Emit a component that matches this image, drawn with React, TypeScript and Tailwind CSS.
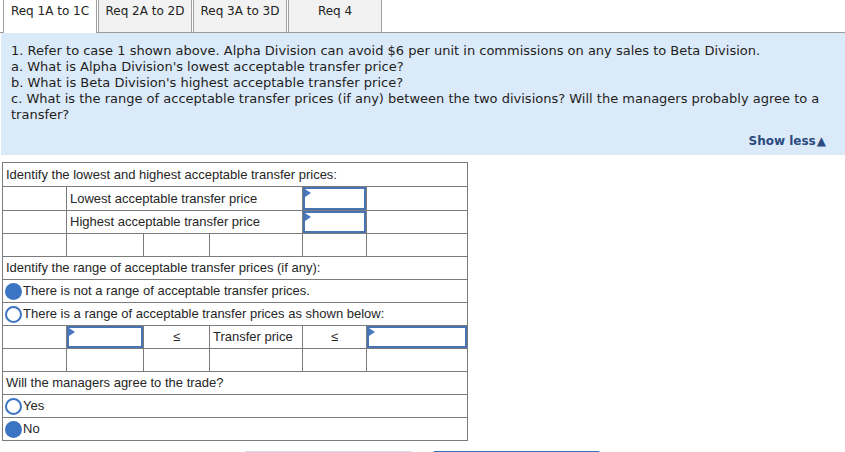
import React from "react"

const tabs = ["Req 1A to 1C", "Req 2A to 2D", "Req 3A to 3D", "Req 4"]

const cellBase = "border border-[#7b7b7b] h-[23px] p-0 px-[3px] align-middle"
const cell = cellBase + " text-left"
const cellCenter = cellBase + " text-center"

function AnswerBox({ tall }: { tall?: boolean }) {
  return (
    <div className={"relative border-2 border-[#4a73b3] bg-white " + (tall ? "h-[23px]" : "h-[22px]")}>
      <span className="absolute left-0 top-0 h-0 w-0 border-y-[4px] border-l-[6px] border-y-transparent border-l-[#4a78c0]" />
    </div>
  )
}

function Radio({ checked }: { checked?: boolean }) {
  return (
    <span
      className={
        "inline-block h-[17px] w-[17px] shrink-0 rounded-full " +
        (checked ? "bg-[#3b74c2]" : "border-2 border-[#3b74c2] bg-white")
      }
    />
  )
}

function RadioRow({ label, checked }: { label: string; checked?: boolean }) {
  return (
    <tr>
      <td colSpan={6} className="border border-[#7b7b7b] h-[23px] p-0 pl-[2px]">
        <div className="flex items-center gap-[1px]">
          <Radio checked={checked} />
          <span>{label}</span>
        </div>
      </td>
    </tr>
  )
}

export default function App() {
  return (
    <div className="w-[845px] h-[452px] overflow-hidden bg-white text-[#222]">
      {/* Tabs */}
      <div className="flex h-[33px] border-b border-[#9a9a9a] pl-[3px] font-['DejaVu_Sans',Verdana,sans-serif] text-[12px]">
        {tabs.map((t, i) => (
          <div
            key={t}
            className={
              "w-[94px] border-x border-[#a0a0a0] pt-[2px] text-center " +
              (i === 0 ? "bg-white -mb-px h-[33px]" : "bg-[#f2f2f2] ml-px h-[32px]")
            }
          >
            {t}
          </div>
        ))}
      </div>

      {/* Question */}
      <div className="ml-px h-[122px] bg-[#dbeaf8] pl-[10px] pr-[14px] pt-[10px] font-['DejaVu_Sans',Verdana,sans-serif] text-[13px] leading-[16px] text-[#1e1e1e]">
        <p>1. Refer to case 1 shown above. Alpha Division can avoid $6 per unit in commissions on any sales to Beta Division.</p>
        <p>a. What is Alpha Division's lowest acceptable transfer price?</p>
        <p>b. What is Beta Division's highest acceptable transfer price?</p>
        <p>c. What is the range of acceptable transfer prices (if any) between the two divisions? Will the managers probably agree to a transfer?</p>
        <div className="mt-[10px] flex items-center justify-end pr-[5px] text-[12px] font-bold text-[#2a4a80]">
          Show less<span className="ml-[1px] text-[12px]">▲</span>
        </div>
      </div>

      {/* Answer table */}
      <table className="ml-[2px] mt-[7px] w-[465px] table-fixed border-collapse font-['Liberation_Sans',Arial,sans-serif] text-[13px] text-[#262626]">
        <colgroup>
          <col className="w-[64px]" />
          <col className="w-[77px]" />
          <col className="w-[66px]" />
          <col className="w-[93px]" />
          <col className="w-[64px]" />
          <col className="w-[101px]" />
        </colgroup>
        <tbody>
          <tr>
            <td colSpan={6} className={cellBase + " text-left h-[24px]"}>Identify the lowest and highest acceptable transfer prices:</td>
          </tr>
          <tr>
            <td className={cell} />
            <td colSpan={3} className={cell}>Lowest acceptable transfer price</td>
            <td className="border border-[#7b7b7b] p-0"><AnswerBox tall /></td>
            <td className={cell} />
          </tr>
          <tr>
            <td className={cell} />
            <td colSpan={3} className={cell}>Highest acceptable transfer price</td>
            <td className="border border-[#7b7b7b] p-0"><AnswerBox /></td>
            <td className={cell} />
          </tr>
          <tr>
            <td className={cell} />
            <td className={cell} />
            <td className={cell} />
            <td className={cell} />
            <td className={cell} />
            <td className={cell} />
          </tr>
          <tr>
            <td colSpan={6} className={cell}>Identify the range of acceptable transfer prices (if any):</td>
          </tr>
          <RadioRow checked label="There is not a range of acceptable transfer prices." />
          <RadioRow label="There is a range of acceptable transfer prices as shown below:" />
          <tr>
            <td className={cell} />
            <td className="border border-[#7b7b7b] p-0"><AnswerBox /></td>
            <td className={cellCenter}>≤</td>
            <td className={cell}>Transfer price</td>
            <td className={cellCenter}>≤</td>
            <td className="border border-[#7b7b7b] p-0"><AnswerBox /></td>
          </tr>
          <tr>
            <td className={cell} />
            <td className={cell} />
            <td className={cell} />
            <td className={cell} />
            <td className={cell} />
            <td className={cell} />
          </tr>
          <tr>
            <td colSpan={6} className={cell}>Will the managers agree to the trade?</td>
          </tr>
          <RadioRow label="Yes" />
          <RadioRow checked label="No" />
        </tbody>
      </table>

      {/* Buttons (cut off at bottom) */}
      <div className="mt-[10px] flex justify-center gap-[21px]">
        <div className="h-[30px] w-[167px] rounded-t-[2px] border-t border-[#d5dee8] bg-[#eef2f6]" />
        <div className="h-[30px] w-[167px] rounded-t-[2px] bg-[#3a6fb0]" />
      </div>
    </div>
  )
}
